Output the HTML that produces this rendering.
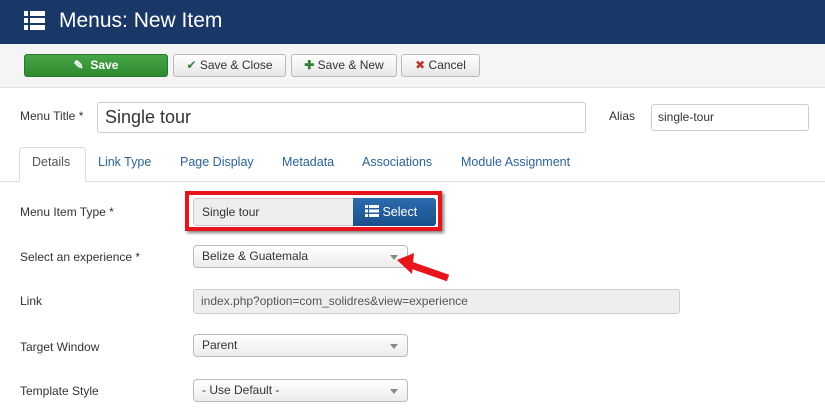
<!DOCTYPE html>
<html><head><style>
*{box-sizing:border-box;margin:0;padding:0}
body{width:825px;height:410px;overflow:hidden;background:#fff;font-family:"Liberation Sans",sans-serif;position:relative;color:#333}
.a{position:absolute}
.hdr{left:0;top:0;width:825px;height:44px;background:#1a3867}
.tb{left:0;top:44px;width:825px;height:44px;background:#f5f5f5;border-bottom:1px solid #e3e3e3}
.btn{position:absolute;top:54px;height:23px;border:1px solid #bbb;border-radius:3px;background:linear-gradient(#fff,#e6e6e6);font-size:12px;line-height:21px;text-align:center;color:#333}
.lbl{position:absolute;left:20px;font-size:12px;color:#333}
.sel{position:absolute;left:193px;width:215px;height:23px;border:1px solid #bbb;border-radius:4px;background:linear-gradient(#fff,#ececec);font-size:12px;line-height:21px;padding-left:8px;color:#333}
.sel:after{content:"";position:absolute;right:9px;top:9px;border-left:4px solid transparent;border-right:4px solid transparent;border-top:5px solid #888}
.tab{position:absolute;top:155px;font-size:12.5px;color:#2a6496}
</style></head><body>
<div class="a hdr"></div>
<svg class="a" style="left:24px;top:11px" width="21" height="19"><g fill="#fff"><rect x="0" y="0" width="4" height="5"/><rect x="6" y="0" width="15" height="5"/><rect x="0" y="7" width="4" height="5"/><rect x="6" y="7" width="15" height="5"/><rect x="0" y="14" width="4" height="5"/><rect x="6" y="14" width="15" height="5"/></g></svg>
<div class="a" style="left:59px;top:9px;font-size:21px;color:#fff">Menus: New Item</div>
<div class="a tb"></div>
<div class="btn" style="left:24px;width:144px;background:linear-gradient(#46a546,#2f8a2f);border-color:#2b7a2b;color:#fff;font-weight:bold">&#9998;&nbsp; Save</div>
<div class="btn" style="left:173px;width:113px"><span style="color:#378137">&#10004;</span> Save &amp; Close</div>
<div class="btn" style="left:291px;width:106px"><span style="color:#378137;font-weight:bold">&#10010;</span> Save &amp; New</div>
<div class="btn" style="left:401px;width:79px"><span style="color:#bd362f">&#10006;</span> Cancel</div>
<div class="lbl" style="top:109px">Menu Title *</div>
<div class="a" style="left:97px;top:102px;width:489px;height:31px;border:1px solid #ccc;border-radius:3px;font-size:18px;line-height:29px;padding-left:7px">Single tour</div>
<div class="a" style="left:609px;top:109px;font-size:12px">Alias</div>
<div class="a" style="left:651px;top:104px;width:158px;height:27px;border:1px solid #ccc;border-radius:3px;font-size:12px;line-height:25px;padding-left:6px">single-tour</div>
<div class="a" style="left:0;top:181px;width:825px;height:1px;background:#ddd"></div>
<div class="a" style="left:19px;top:147px;width:67px;height:35px;border:1px solid #ddd;border-bottom:1px solid #fff;border-radius:4px 4px 0 0;background:#fff"></div>
<div class="tab" style="left:32px;color:#555">Details</div>
<div class="tab" style="left:98px">Link Type</div>
<div class="tab" style="left:180px">Page Display</div>
<div class="tab" style="left:282px">Metadata</div>
<div class="tab" style="left:362px">Associations</div>
<div class="tab" style="left:461px">Module Assignment</div>
<div class="lbl" style="top:205px">Menu Item Type *</div>
<div class="a" style="left:185px;top:191px;width:257px;height:40px;border:4px solid #e8141c;box-shadow:2px 2px 3px rgba(0,0,0,.5)"></div>
<div class="a" style="left:193px;top:198px;width:243px;height:28px;border:1px solid #ccc;border-radius:3px;background:#eee;font-size:12px;line-height:26px;padding-left:8px">Single tour</div>
<div class="a" style="left:353px;top:198px;width:83px;height:28px;background:linear-gradient(#2b6cb0,#1a4f8a);border-radius:0 3px 3px 0;color:#fff;font-size:12.5px;line-height:28px;padding-left:12px">
<svg width="14" height="12" style="vertical-align:-1px"><g fill="#fff"><rect x="0" y="0" width="3" height="3"/><rect x="4" y="0" width="10" height="3"/><rect x="0" y="4.5" width="3" height="3"/><rect x="4" y="4.5" width="10" height="3"/><rect x="0" y="9" width="3" height="3"/><rect x="4" y="9" width="10" height="3"/></g></svg> Select</div>
<div class="lbl" style="top:250px">Select an experience *</div>
<div class="sel" style="top:245px">Belize &amp; Guatemala</div>
<svg class="a" style="left:390px;top:250px" width="70" height="35"><line x1="58" y1="28" x2="18" y2="14" stroke="#e8141c" stroke-width="7"/><polygon points="7,10 24,3 22,24" fill="#e8141c"/></svg>
<div class="lbl" style="top:294px">Link</div>
<div class="a" style="left:193px;top:289px;width:487px;height:25px;border:1px solid #ccc;border-radius:3px;background:#eee;font-size:12px;line-height:23px;padding-left:7px;color:#555">index.php?option=com_solidres&amp;view=experience</div>
<div class="lbl" style="top:340px">Target Window</div>
<div class="sel" style="top:334px">Parent</div>
<div class="lbl" style="top:384px">Template Style</div>
<div class="sel" style="top:379px">- Use Default -</div>
</body></html>
